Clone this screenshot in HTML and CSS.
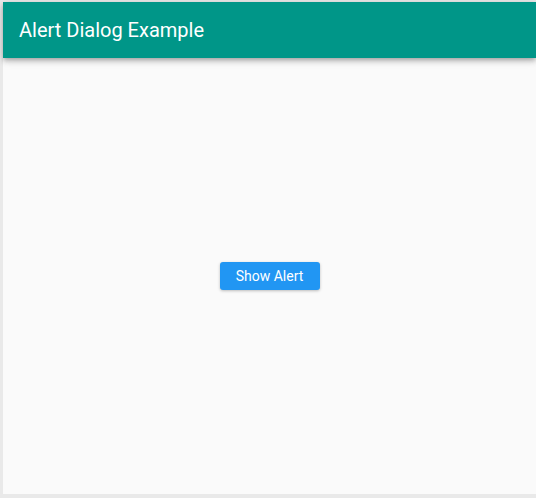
FILE: index.html
```html
<!DOCTYPE html>
<html>
<head>
<meta charset="utf-8">
<link rel="stylesheet" href="styles.css">
</head>
<body>
<div class="app">
  <header class="appbar"><h1 class="title">Alert Dialog Example</h1></header>
  <main class="content">
    <button class="btn">Show Alert</button>
  </main>
</div>
</body>
</html>
```
FILE: styles.css
```css
html, body { margin: 0; padding: 0; }
body {
  background: #e9e9e9;
  font-family: Roboto, "Noto Sans", sans-serif;
  padding: 2px 0 4px 3px;
  height: 498px;
  box-sizing: border-box;
}
.app {
  height: 492px;
  display: flex;
  flex-direction: column;
  background: #fafafa;
}
.appbar {
  height: 56px;
  flex: none;
  background: #009688;
  display: flex;
  align-items: center;
  padding-left: 16px;
  box-shadow: 0 2px 4px -1px rgba(0,0,0,0.2), 0 4px 5px 0 rgba(0,0,0,0.14), 0 1px 10px 0 rgba(0,0,0,0.12);
  position: relative;
  z-index: 1;
}
.title {
  margin: 0;
  color: #fff;
  font-size: 20px;
  font-weight: 400;
}
.content {
  flex: 1;
  display: flex;
  align-items: center;
  justify-content: center;
}
.btn {
  width: 100px;
  height: 28px;
  border: none;
  border-radius: 3px;
  background: #2196f3;
  color: #fff;
  font-family: Roboto, sans-serif;
  font-size: 14px;
  padding: 0;
  box-shadow: 0 1px 3px rgba(0,0,0,0.25);
}
```
